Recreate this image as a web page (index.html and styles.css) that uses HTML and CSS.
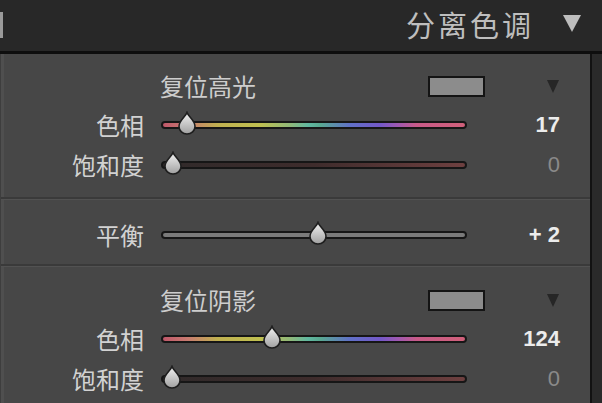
FILE: index.html
```html
<!DOCTYPE html>
<html lang="zh">
<head>
<meta charset="utf-8">
<link rel="stylesheet" href="styles.css">
</head>
<body>
<div class="screen">
  <div class="header">
    <span class="frag"></span>
    <span class="title">分离色调</span>
    <svg class="hdr-tri" viewBox="0 0 20 19" width="20" height="19"><polygon points="1,1 19,1 10,18" fill="#bdbdbd"/></svg>
  </div>
  <div class="panel">
    <div class="section s1">
      <div class="title-row">
        <span class="sec-title">复位高光</span>
        <span class="swatch"></span>
        <svg class="tri" viewBox="0 0 12 15" width="12" height="15"><polygon points="0,1 12,1 6,14" fill="#262626"/></svg>
      </div>
      <div class="row">
        <span class="label">色相</span>
        <div class="slider"><div class="track hue"></div>
          <svg class="thumb" style="left:8.5%" viewBox="0 0 20 24" width="20" height="24"><use href="#drop"/></svg></div>
        <span class="value">17</span>
      </div>
      <div class="row">
        <span class="label">饱和度</span>
        <div class="slider"><div class="track sat"></div>
          <svg class="thumb" style="left:3.9%" viewBox="0 0 20 24" width="20" height="24"><use href="#drop"/></svg></div>
        <span class="value dim">0</span>
      </div>
    </div>
    <div class="sep"></div>
    <div class="section s2">
      <div class="row">
        <span class="label">平衡</span>
        <div class="slider"><div class="track bal"></div>
          <svg class="thumb" style="left:51.3%" viewBox="0 0 20 24" width="20" height="24"><use href="#drop"/></svg></div>
        <span class="value">+ 2</span>
      </div>
    </div>
    <div class="sep"></div>
    <div class="section s3">
      <div class="title-row">
        <span class="sec-title">复位阴影</span>
        <span class="swatch"></span>
        <svg class="tri" viewBox="0 0 12 15" width="12" height="15"><polygon points="0,1 12,1 6,14" fill="#262626"/></svg>
      </div>
      <div class="row">
        <span class="label">色相</span>
        <div class="slider"><div class="track hue"></div>
          <svg class="thumb" style="left:36.3%" viewBox="0 0 20 24" width="20" height="24"><use href="#drop"/></svg></div>
        <span class="value">124</span>
      </div>
      <div class="row">
        <span class="label">饱和度</span>
        <div class="slider"><div class="track sat"></div>
          <svg class="thumb" style="left:3.6%" viewBox="0 0 20 24" width="20" height="24"><use href="#drop"/></svg></div>
        <span class="value dim">0</span>
      </div>
    </div>
  </div>
</div>
<svg class="defs" width="0" height="0">
  <defs>
    <linearGradient id="tg" x1="0" y1="0" x2="0" y2="1">
      <stop offset="0" stop-color="#f2f2f2"/>
      <stop offset="1" stop-color="#a0a0a0"/>
    </linearGradient>
    <path id="drop" d="M10 1.5 C11.5 6 18 9 18 15.5 A8 7.5 0 0 1 2 15.5 C2 9 8.5 6 10 1.5 Z" fill="url(#tg)" stroke="#1e1e1e" stroke-width="1.6"/>
  </defs>
</svg>
</body>
</html>
```
FILE: styles.css
```css
* { box-sizing: border-box; }
html, body { margin: 0; padding: 0; }
body {
  background: #2a2a2a;
  font-family: "Noto Sans CJK SC", "Noto Sans", sans-serif;
  width: 602px;
  height: 403px;
  overflow: hidden;
}
.screen {
  width: 602px;
  height: 403px;
  display: flex;
  flex-direction: column;
}
.header {
  height: 54px;
  flex: none;
  background: #282828;
  border-bottom: 3px solid #0e0e0e;
  display: flex;
  align-items: center;
  padding-right: 20px;
}
.frag {
  width: 3px;
  height: 26px;
  background: #9a9a9a;
  margin-top: -2px;
}
.title {
  margin-left: auto;
  font-size: 29px;
  letter-spacing: 3px;
  color: #bebebe;
  line-height: 1;
  margin-top: -2px;
}
.hdr-tri {
  margin-left: 28px;
  margin-top: -4px;
}
.panel {
  flex: 1;
  width: 592px;
  background: #474747;
  border-right: 2px solid #121212;
  border-left: 1px solid #3e3e3e;
  box-shadow: inset 3px 0 0 #4f4f4f;
  display: flex;
  flex-direction: column;
}
.section { display: flex; flex-direction: column; }
.s1 { padding-top: 13px; height: 143px; }
.s2 { padding-top: 15px; height: 64px; }
.s3 { padding-top: 14px; }
.sep {
  flex: none;
  background: #3a3a3a;
  border-bottom: 1px solid #525252;
  height: 3px;
}
.title-row {
  height: 38px;
  display: flex;
  align-items: center;
  padding-left: 159px;
  padding-right: 31px;
}
.sec-title {
  font-size: 24px;
  color: #cdcdcd;
  line-height: 1;
}
.swatch {
  margin-left: auto;
  width: 57px;
  height: 21px;
  background: #8c8c8c;
  border: 2px solid #141414;
}
.tri { margin-left: 62px; }
.row {
  height: 40px;
  display: grid;
  grid-template-columns: 160px 306px 93px;
  align-items: center;
}
.label {
  text-align: right;
  padding-right: 17px;
  font-size: 24px;
  color: #d2d2d2;
  line-height: 1;
}
.slider {
  position: relative;
  height: 22px;
  display: flex;
  align-items: center;
}
.track {
  width: 100%;
  height: 8px;
  border-radius: 4px;
  border: 2px solid #161616;
}
.hue {
  background: linear-gradient(90deg, #c0586a 0%, #c87a70 8%, #c0b050 18%, #c0c050 32%, #90b878 42%, #60b8a0 48%, #58a890 52%, #6070c8 62%, #7458c8 72%, #a058b0 78%, #c85a88 84%, #d0607a 100%);
}
.sat {
  background: linear-gradient(90deg, #302a2a 0%, #3e2c2c 50%, #6e4040 100%);
}
.bal {
  background: #7a7a7a;
}
.thumb {
  position: absolute;
  top: 0;
  margin-left: -10px;
  margin-top: -3px;
}
.value {
  text-align: right;
  font-family: "Liberation Sans", Arial, sans-serif;
  font-weight: bold;
  font-size: 22px;
  color: #ececec;
  line-height: 1;
  white-space: pre;
}
.value.dim { color: #8a8a8a; font-weight: normal; }
.defs { position: absolute; }
```
